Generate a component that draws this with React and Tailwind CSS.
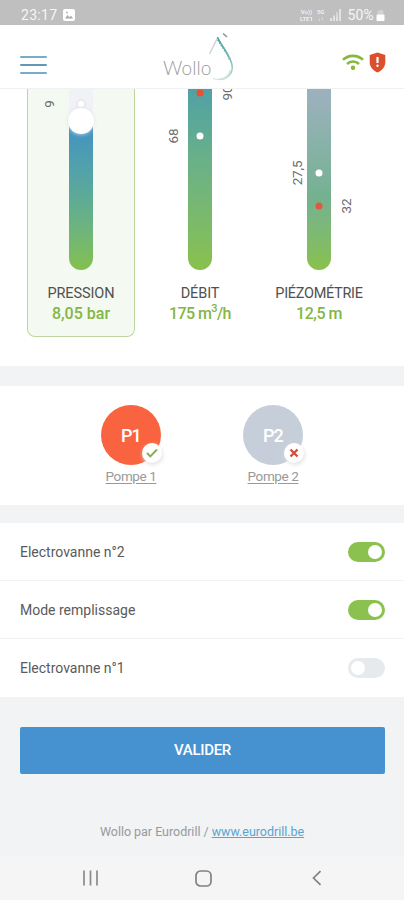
import { useState } from "react";

const gauges = [
  {
    id: "pression",
    label: "PRESSION",
    labelStyle: "tracking-[-0.1px]",
    value: "8,05 bar",
    active: true,
    track: "bg-[#f1f2f7]",
    fill: "h-[149px] bg-linear-to-b from-[#4190c6] via-[#60ac93] via-55% to-[#84c04c]",
    knob: true,
    points: [{ top: 15, color: "bg-white shadow-[0_0_2px_#b9bdc9]" }],
    ticks: [{ text: "9", top: 15, left: -19 }],
  },
  {
    id: "debit",
    label: "DÉBIT",
    labelStyle: "tracking-[-0.1px]",
    value: "175 m",
    valueStyle: "tracking-[-0.6px]",
    sup: "3",
    unit: "/h",
    track: "bg-[#e4edf0]",
    fill: "h-full bg-linear-to-b from-[#50a1a5] via-[#6db284] via-45% to-[#89c14a]",
    points: [
      { top: 4, color: "bg-[#e8502f]" },
      { top: 47, color: "bg-white" },
    ],
    ticks: [
      { text: "68", top: 47, left: -14 },
      { text: "90", top: 4, left: 40 },
    ],
  },
  {
    id: "piezometrie",
    label: "PIÉZOMÉTRIE",
    labelStyle: "tracking-[-0.3px]",
    value: "12,5 m",
    valueStyle: "tracking-[-0.5px]",
    track: "bg-[#e4edf0]",
    fill: "h-full bg-linear-to-b from-[#9db1c0] via-[#74b190] via-60% to-[#89c14a]",
    points: [
      { top: 84, color: "bg-white" },
      { top: 117, color: "bg-[#e25840]" },
    ],
    ticks: [
      { text: "27,5", top: 84, left: -9 },
      { text: "32", top: 117, left: 40 },
    ],
  },
];

function StatusBar() {
  return (
    <div className="flex h-[25px] shrink-0 items-center bg-[#bfbfbf] pr-[19px] pl-[21px] pt-[5px] text-[#f6f6f6]">
      <span className="text-[14px] leading-none tracking-[0.3px]">23:17</span>
      <svg className="ml-[6px]" width="12" height="12" viewBox="0 0 12 12">
        <rect width="12" height="12" rx="2" fill="#fff" />
        <path d="M2 9.5 4.5 6l1.8 2.2L8 6.8l2.2 2.7z" fill="#aaa" />
        <circle cx="4" cy="3.5" r="1" fill="#bbb" />
      </svg>
      <div className="ml-auto flex items-center">
        <div className="flex flex-col items-center text-[6px] leading-[7px] font-medium">
          <span>Vo))</span>
          <span>LTE1</span>
        </div>
        <div className="ml-[4px] flex flex-col items-center text-[6px] leading-[7px] font-medium">
          <span>5G</span>
          <span className="leading-[7px]">↓↑</span>
        </div>
        <svg className="ml-[6px]" width="11" height="12" viewBox="0 0 11 12">
          <path d="M1 9v3M4 6.5V12M7 3.5V12M10 0v12" stroke="#f4f4f4" strokeWidth="1.3" />
          <path d="M7 3.5V8" stroke="#d4d4d4" strokeWidth="1.4" />
        </svg>
        <span className="ml-[6px] text-[14px] leading-none tracking-[0.2px]">50%</span>
        <svg className="ml-[2px]" width="9" height="12" viewBox="0 0 9 12">
          <rect x="1.5" y="1" width="6" height="5" rx="1.5" fill="#d2d2d2" />
          <rect x="0.5" y="5.5" width="8" height="6.5" rx="1" fill="#fff" />
        </svg>
      </div>
    </div>
  );
}

function Logo() {
  return (
    <div className="flex h-full items-start">
      <span className="mt-[33px] font-['Lato'] text-[19px] leading-[20px] font-light tracking-[0.1px] text-[#9a9a9a]">
        Wollo
      </span>
      <svg className="mt-[6px] -ml-[4px]" width="28" height="50" viewBox="0 0 28 50" fill="none">
        <defs>
          <linearGradient id="drop" gradientUnits="userSpaceOnUse" x1="0" y1="5" x2="0" y2="49">
            <stop offset="0" stopColor="#3d9fa8" />
            <stop offset="0.5" stopColor="#7bbcae" />
            <stop offset="1" stopColor="#bcdcca" />
          </linearGradient>
        </defs>
        <path d="M10.5 7 2.5 23" stroke="#cdd2d2" strokeWidth="1.4" />
        <path d="M10.5 6C14 15 25.3 26 25.3 36.5c0 7-6.3 12-13.3 12" stroke="url(#drop)" strokeWidth="1.5" />
        <path d="M11 8.5c3 6 9.5 13.5 12 20.5" stroke="url(#drop)" strokeWidth="2" strokeDasharray="2 1" />
        <path d="M6 47.5c3 1.2 6.5 1.3 10 0 3.5-1.5 6.5-4.5 7.5-8.5" stroke="#d3e5dc" strokeWidth="1.3" />
        <path d="m16 2.5 4 3.5" stroke="#8b9092" strokeWidth="1.6" />
      </svg>
    </div>
  );
}

function Header() {
  return (
    <header className="flex h-[64px] shrink-0 border-b border-[#f0f1f3] bg-white pr-[18px] pl-[20px]">
      <button className="mt-[31px] flex h-[18px] w-[27px] flex-col justify-between" aria-label="Menu">
        <span className="h-[2px] w-full rounded bg-[#79acc9]" />
        <span className="h-[2px] w-full rounded bg-[#6397b6]" />
        <span className="h-[2px] w-full rounded bg-[#79acc9]" />
      </button>
      <div className="ml-[116px]">
        <Logo />
      </div>
      <div className="mt-[27px] ml-auto flex items-start gap-[5px]">
        <svg className="mt-[2px]" width="22" height="17" viewBox="0 0 22 17" fill="none" stroke="#86b840">
          <path d="M1 5.8a14.5 14.5 0 0 1 20 0" strokeWidth="2.7" />
          <path d="M5 10a8.7 8.7 0 0 1 12 0" strokeWidth="2.5" />
          <circle cx="11" cy="13.7" r="2.2" fill="#86b840" stroke="none" />
        </svg>
        <svg width="17" height="21" viewBox="0 0 17 21">
          <path d="M8.5.5 16.3 3v7c0 5-3.3 8.500-7.800 10.500C4 18.500.7 15 .7 10V3z" fill="#db4f2e" />
          <path d="M8.5 5v6" stroke="#fff" strokeWidth="2.2" />
          <circle cx="8.5" cy="13.8" r="1.2" fill="#fff" />
        </svg>
      </div>
    </header>
  );
}

function Gauge({ gauge }) {
  return (
    <div
      className={`flex h-[248px] w-[108px] flex-col items-center border-x border-b ${
        gauge.active ? "rounded-b-[8px] border-[#bcd69b] bg-[#f4faf1]" : "border-transparent"
      }`}
    >
      <div className={`relative flex h-[181px] w-[24px] flex-col justify-end rounded-b-full ${gauge.track}`}>
        <div className={`w-full rounded-b-full ${gauge.fill}`} />
        {gauge.points.map((point) => (
          <span
            key={point.top}
            className={`absolute left-1/2 size-[7px] -translate-x-1/2 -translate-y-1/2 rounded-full ${point.color}`}
            style={{ top: point.top }}
          />
        ))}
        {gauge.knob && (
          <span className="absolute top-[19px] -left-[1px] size-[26px] rounded-full bg-white shadow-[0_0_4px_#dfe2ea]" />
        )}
        {gauge.ticks.map((tick) => (
          <span
            key={tick.text}
            className="absolute -translate-x-1/2 -translate-y-1/2 rotate-180 text-[13.5px] leading-none tracking-[-0.2px] text-[#6b6b6b] [writing-mode:vertical-rl]"
            style={{ top: tick.top, left: tick.left }}
          >
            {tick.text}
          </span>
        ))}
      </div>
      <p className={`mt-[14px] text-[14.5px] leading-[20px] whitespace-nowrap text-[#505050] ${gauge.labelStyle}`}>
        {gauge.label}
      </p>
      <p className={`text-[16px] leading-[20px] font-medium whitespace-nowrap text-[#83b645] ${gauge.valueStyle ?? ""}`}>
        {gauge.value}
        {gauge.sup && <sup className="-top-[7px] text-[11px]">{gauge.sup}</sup>}
        {gauge.unit}
      </p>
    </div>
  );
}

function Pump({ code, name, on }) {
  return (
    <div className="flex flex-col items-center">
      <div
        className={`relative flex size-[60px] items-center justify-center rounded-full text-[18px] font-medium tracking-[-0.8px] text-white ${
          on ? "bg-[#fa6340]" : "bg-[#c6ced9]"
        }`}
      >
        {code}
        <span className="absolute top-[38px] left-[41px] flex size-[20px] items-center justify-center rounded-full bg-white shadow-[1px_2px_4px_#e2e2e2]">
          {on ? (
            <svg width="14" height="12" viewBox="0 0 14 12" fill="none">
              <path d="m2 6 3.3 3.3L12 2.5" stroke="#83b04c" strokeWidth="1.9" />
            </svg>
          ) : (
            <svg width="10" height="10" viewBox="0 0 10 10" fill="none">
              <path d="m1.5 1.5 7 7m0-7-7 7" stroke="#d94a32" strokeWidth="2.3" />
            </svg>
          )}
        </span>
      </div>
      <a
        href="#"
        className="mt-[2px] text-[13.5px] leading-[18px] tracking-[-0.4px] text-[#999] underline underline-offset-2"
      >
        {name}
      </a>
    </div>
  );
}

function SwitchRow({ label, checked, onChange }) {
  return (
    <div className="flex h-[58px] items-center justify-between border-b border-[#f2f3f4] pr-[19px] pl-[20px] last:border-b-0">
      <span className="mt-[1px] text-[14px] text-[#5a5a5a]">{label}</span>
      <button
        role="switch"
        aria-checked={checked}
        onClick={onChange}
        className={`flex h-[20px] w-[37px] items-center rounded-full px-[3px] ${
          checked ? "justify-end bg-[#8bc14f]" : "justify-start bg-[#e6eaed]"
        }`}
      >
        <span className="size-[14px] rounded-full bg-white" />
      </button>
    </div>
  );
}

export default function App() {
  const [switches, setSwitches] = useState([
    { id: 1, label: "Electrovanne n°2", checked: true },
    { id: 2, label: "Mode remplissage", checked: true },
    { id: 3, label: "Electrovanne n°1", checked: false },
  ]);

  const toggle = (id) =>
    setSwitches(switches.map((s) => (s.id === id ? { ...s, checked: !s.checked } : s)));

  return (
    <div className="flex h-[900px] w-[404px] flex-col overflow-hidden bg-[#f1f3f5] font-['Roboto',sans-serif]">
      <StatusBar />
      <Header />

      {/* Jauges */}
      <section className="flex h-[277px] shrink-0 gap-[11px] overflow-hidden bg-white pl-[27px]">
        {gauges.map((gauge) => (
          <Gauge key={gauge.id} gauge={gauge} />
        ))}
      </section>

      {/* Pompes */}
      <section className="mt-[20px] flex h-[119px] shrink-0 justify-center gap-[82px] bg-white pt-[19px]">
        <Pump code="P1" name="Pompe 1" on />
        <Pump code="P2" name="Pompe 2" />
      </section>

      {/* Commandes */}
      <section className="mt-[18px] shrink-0 bg-white">
        {switches.map((s) => (
          <SwitchRow key={s.id} label={s.label} checked={s.checked} onChange={() => toggle(s.id)} />
        ))}
      </section>

      <div className="pt-[30px] pr-[19px] pl-[20px]">
        <button className="h-[47px] w-full rounded-[2px] bg-[#4692d0] text-[15px] font-medium tracking-[-0.3px] text-white">
          VALIDER
        </button>
      </div>

      <footer className="mt-[48px] text-center text-[12.5px] leading-[20px] tracking-[-0.03px] text-[#999]">
        Wollo par Eurodrill /{" "}
        <a href="#" className="text-[#5ba3cf] underline">
          www.eurodrill.be
        </a>
      </footer>

      <nav className="mt-auto flex h-[44px] shrink-0 items-center bg-[#f5f5f5] pl-[82px]">
        <svg width="17" height="16" viewBox="0 0 17 16" stroke="#8a8a8a" strokeWidth="1.7">
          <path d="M2 .5v15M8.5.5v15M15 .5v15" />
        </svg>
        <svg className="ml-[96px]" width="17" height="17" viewBox="0 0 17 17" fill="none" stroke="#808080" strokeWidth="1.7">
          <rect x="1" y="1" width="15" height="15" rx="4.5" />
        </svg>
        <svg className="ml-[99px]" width="12" height="16" viewBox="0 0 12 16" fill="none" stroke="#808080" strokeWidth="1.7">
          <path d="M9.5 1.2 2.5 8l7 6.8" />
        </svg>
      </nav>
    </div>
  );
}
